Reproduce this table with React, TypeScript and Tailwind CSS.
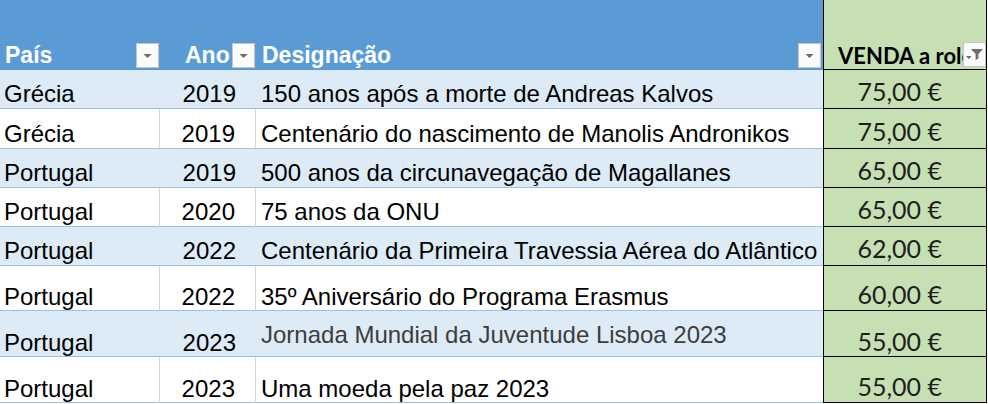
const rows = [
  { pais: "Grécia", ano: "2019", nome: "150 anos após a morte de Andreas Kalvos", preco: "75,00 €", h: "h-[39px]", blue: true },
  { pais: "Grécia", ano: "2019", nome: "Centenário do nascimento de Manolis Andronikos", preco: "75,00 €", h: "h-[40px]", blue: false },
  { pais: "Portugal", ano: "2019", nome: "500 anos da circunavegação de Magallanes", preco: "65,00 €", h: "h-[39px]", blue: true },
  { pais: "Portugal", ano: "2020", nome: "75 anos da ONU", preco: "65,00 €", h: "h-[39px]", blue: false },
  { pais: "Portugal", ano: "2022", nome: "Centenário da Primeira Travessia Aérea do Atlântico", preco: "62,00 €", h: "h-[39px]", blue: true },
  { pais: "Portugal", ano: "2022", nome: "35º Aniversário do Programa Erasmus", preco: "60,00 €", h: "h-[45px]", blue: false },
  { pais: "Portugal", ano: "2023", nome: "Jornada Mundial da Juventude Lisboa 2023", preco: "55,00 €", h: "h-[46px]", blue: true, odd: true },
  { pais: "Portugal", ano: "2023", nome: "Uma moeda pela paz 2023", preco: "55,00 €", h: "h-[46px]", blue: false },
];

const FilterButton = ({ funnel = false, className = "" }: { funnel?: boolean; className?: string }) => (
  <div
    className={`absolute bottom-[2px] w-[23px] h-[25px] bg-[#fbfbfb] border border-[#c6c6c6] flex items-center justify-center ${className}`}
  >
    {funnel ? (
      <svg width="20" height="17" viewBox="0 0 20 17">
        <path d="M6 3h12l-4.6 5v4.6l-2.8 1.5V8z" fill="#6d6d6d" />
        <path d="M1 10h5.5l-2.75 3.2z" fill="#6d6d6d" />
      </svg>
    ) : (
      <svg width="9" height="6" viewBox="0 0 9 6">
        <path d="M0.5 1h8l-4 4z" fill="#6b6b6b" />
      </svg>
    )}
  </div>
);

export default function App() {
  return (
    <div className="w-[988px] h-[404px] bg-white overflow-hidden font-['Liberation_Sans',Arial,sans-serif] text-black">
      {/* Header */}
      <div className="flex h-[70px]">
        <div className="relative w-[160px] bg-[#5b9bd5] flex items-end pl-[5px] pb-[3px]">
          <span className="text-[23px] leading-[23px] font-bold text-white">País</span>
          <FilterButton className="right-[1px]" />
        </div>
        <div className="relative w-[96px] bg-[#5b9bd5] flex items-end pl-[25px] pb-[3px]">
          <span className="text-[23px] leading-[23px] font-bold text-white">Ano</span>
          <FilterButton className="right-[1px]" />
        </div>
        <div className="relative w-[567px] bg-[#5b9bd5] flex items-end pl-[6px] pb-[3px]">
          <span className="text-[23px] leading-[23px] font-bold text-white">Designação</span>
          <FilterButton className="right-[2px]" />
        </div>
        <div className="relative w-[164px] bg-[#c6e0b4] border-x border-b border-black flex items-end pl-[14px] pb-[2px] overflow-hidden">
          <span className="font-['Lato',sans-serif] text-[22px] leading-[22px] font-bold whitespace-nowrap">
            VENDA a rolo
          </span>
          <FilterButton funnel className="right-0" />
        </div>
      </div>

      {/* Rows */}
      {rows.map((r, i) => {
        const tall = i >= 5;
        const pb = tall ? "pb-[1px]" : "pb-[2px]";
        const fill = r.blue ? "bg-[#ddebf7]" : "bg-white";
        const grid = r.blue ? "" : "border-r border-r-[#d4d4d4]";
        return (
          <div key={i} className={`flex ${r.h}`}>
            <div className={`w-[160px] ${fill} ${grid} border-b border-b-[#9bc2e6] flex items-end pl-[4px] ${pb}`}>
              <span className="text-[24px] leading-[24px]">{r.pais}</span>
            </div>
            <div className={`w-[96px] ${fill} ${grid} border-b border-b-[#9bc2e6] flex items-end justify-end pr-[20px] ${pb}`}>
              <span className="text-[24px] leading-[24px]">{r.ano}</span>
            </div>
            <div
              className={`w-[567px] ${fill} border-b border-b-[#9bc2e6] flex items-end pl-[5px] ${
                r.odd ? "pb-[9px]" : pb
              }`}
            >
              <span className={`text-[24px] leading-[24px] whitespace-nowrap ${r.odd ? "text-[#3d3d3d]" : ""}`}>
                {r.nome}
              </span>
            </div>
            <div
              className={`w-[164px] bg-[#c6e0b4] border-x border-b border-black flex items-end justify-end pr-[44px] ${
                i === 6 ? "pb-[2px]" : tall ? "pb-[3px]" : "pb-[4px]"
              }`}
            >
              <span className="font-['Lato',sans-serif] text-[25px] leading-[25px] text-[#1e1e1e] whitespace-nowrap">
                {r.preco}
              </span>
            </div>
          </div>
        );
      })}
    </div>
  );
}
